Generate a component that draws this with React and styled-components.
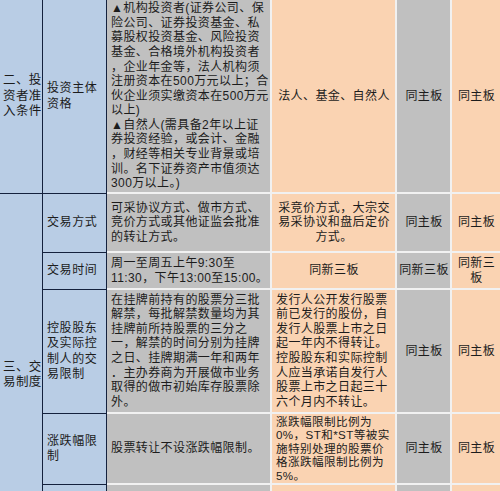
import React from 'react';
import styled, { createGlobalStyle } from 'styled-components';

const GlobalStyle = createGlobalStyle`
  html, body {
    margin: 0;
    padding: 0;
    background: #ffffff;
    overflow: hidden;
  }
  body {
    font-family: "Liberation Sans", "Noto Sans CJK SC", sans-serif;
  }
`;

const BLUE = '#b9cde5';
const GRAY = '#c0c0c0';
const PEACH = '#fad3b2';
const NAVY = '#14213d';
const LINE = '#f1f1f1';

const Table = styled.div`
  width: 500px;
  display: grid;
  grid-template-columns: 43px 64px 165px 125px 55px 48px;
  grid-template-rows: 194px 59px 37px 124px 71px 71px;
  color: #1c1c1c;
  font-size: 12px;
  line-height: 14.6px;
  letter-spacing: 0.4px;
`;

const Cell = styled.div`
  box-sizing: border-box;
  grid-row: ${(p) => p.$row};
  grid-column: ${(p) => p.$col};
  display: flex;
  flex-direction: column;
  justify-content: center;
  overflow: hidden;
  text-align: ${(p) => (p.$center ? 'center' : 'left')};
  align-items: ${(p) => (p.$center ? 'center' : 'flex-start')};
`;

const Category = styled(Cell)`
  background: ${BLUE};
  border-right: 1px solid ${NAVY};
  border-bottom: ${(p) => (p.$last ? 'none' : `1px solid ${NAVY}`)};
  padding: 0 0 0 3px;
  font-size: 12.5px;
  line-height: 15.5px;
`;

const Item = styled(Cell)`
  background: ${BLUE};
  border-right: 1px solid ${NAVY};
  border-bottom: 1px solid ${NAVY};
  padding: 0 0 0 4px;
  line-height: 15.5px;
  letter-spacing: 0.6px;
`;

const Desc = styled(Cell)`
  background: ${(p) => p.$tone};
  border-bottom: 2px solid ${LINE};
  border-right: ${(p) => (p.$end ? 'none' : `2px solid ${LINE}`)};
  padding: 0 3px 0 4px;
  font-size: ${(p) => (p.$tight ? '11.6px' : '12px')};
  line-height: ${(p) => (p.$tight ? '13.5px' : '14.6px')};
`;

const Line = styled.div`
  white-space: nowrap;
`;

function Lines({ text }) {
  return text.map((t, i) => <Line key={i}>{t}</Line>);
}

const rows = [
  {
    item: ['投资主体', '资格'],
    desc: [
      '▲机构投资者(证券公司、保',
      '险公司、证券投资基金、私',
      '募股权投资基金、风险投资',
      '基金、合格境外机构投资者',
      '，企业年金等，法人机构须',
      '注册资本在500万元以上；合',
      '伙企业须实缴资本在500万元',
      '以上)',
      '▲自然人(需具备2年以上证',
      '券投资经验，或会计、金融',
      '，财经等相关专业背景或培',
      '训。名下证券资产市值须达',
      '300万以上。)',
    ],
    main: ['法人、基金、自然人'],
    mainCenter: true,
    b: ['同主板'],
    c: ['同主板'],
  },
  {
    item: ['交易方式'],
    desc: ['可采协议方式、做市方式、', '竞价方式或其他证监会批准', '的转让方式。'],
    main: ['采竞价方式，大宗交', '易采协议和盘后定价', '方式。'],
    mainCenter: true,
    b: ['同主板'],
    c: ['同主板'],
  },
  {
    item: ['交易时间'],
    desc: ['周一至周五上午9:30至', '11:30，下午13:00至15:00。'],
    main: ['同新三板'],
    mainCenter: true,
    b: ['同新三板'],
    c: ['同新三', '板'],
  },
  {
    item: ['控股股东', '及实际控', '制人的交', '易限制'],
    desc: [
      '在挂牌前持有的股票分三批',
      '解禁，每批解禁数量均为其',
      '挂牌前所持股票的三分之',
      '一，解禁的时间分别为挂牌',
      '之日、挂牌期满一年和两年',
      '．主办券商为开展做市业务',
      '取得的做市初始库存股票除',
      '外。',
    ],
    main: [
      '发行人公开发行股票',
      '前已发行的股份，自',
      '发行人股票上市之日',
      '起一年内不得转让。',
      '控股股东和实际控制',
      '人应当承诺自发行人',
      '股票上市之日起三十',
      '六个月内不转让。',
    ],
    b: ['同主板'],
    c: ['同主板'],
  },
  {
    item: ['涨跌幅限', '制'],
    desc: ['股票转让不设涨跌幅限制。'],
    main: ['涨跌幅限制比例为', '0%，ST和*ST等被实', '施特别处理的股票价', '格涨跌幅限制比例为', '5%。'],
    mainTight: true,
    b: ['同主板'],
    c: ['同主板'],
  },
  {
    item: [],
    desc: [],
    main: [],
    b: [],
    c: [],
  },
];

export default function App() {
  return (
    <>
      <GlobalStyle />
      <Table>
        <Category $row="1 / span 1" $col={1}>
          <Lines text={['二、投', '资者准', '入条件']} />
        </Category>
        <Category $row="2 / span 5" $col={1} $last>
          <Lines text={['三、交', '易制度']} />
        </Category>
        {rows.map((r, i) => (
          <React.Fragment key={i}>
            <Item $row={i + 1} $col={2}>
              <Lines text={r.item} />
            </Item>
            <Desc $row={i + 1} $col={3} $tone={GRAY}>
              <Lines text={r.desc} />
            </Desc>
            <Desc $row={i + 1} $col={4} $tone={PEACH} $center={r.mainCenter} $tight={r.mainTight}>
              <Lines text={r.main} />
            </Desc>
            <Desc $row={i + 1} $col={5} $tone={GRAY} $center>
              <Lines text={r.b} />
            </Desc>
            <Desc $row={i + 1} $col={6} $tone={PEACH} $center $end>
              <Lines text={r.c} />
            </Desc>
          </React.Fragment>
        ))}
      </Table>
    </>
  );
}
